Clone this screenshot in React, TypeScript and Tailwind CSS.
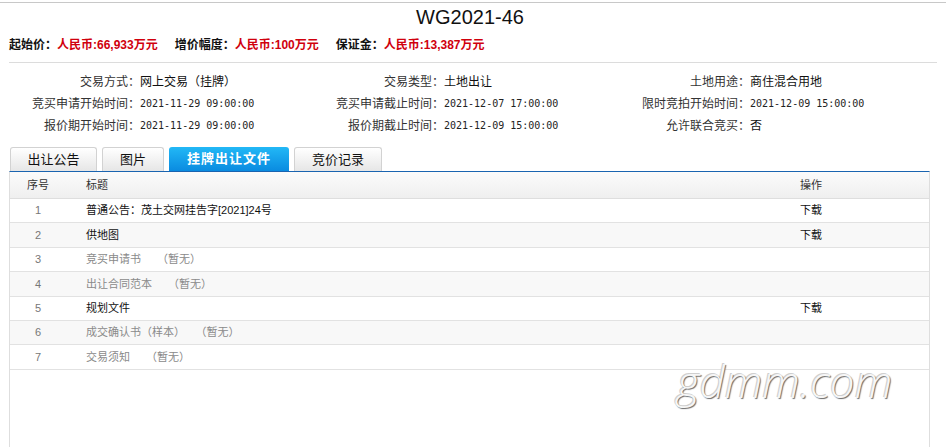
import { ReactNode } from 'react';

type InfoCell = { label: string; value: string; mono?: boolean };

const infoRows: InfoCell[][] = [
    [
        { label: '交易方式：', value: '网上交易（挂牌）' },
        { label: '交易类型：', value: '土地出让' },
        { label: '土地用途：', value: '商住混合用地' },
    ],
    [
        { label: '竞买申请开始时间：', value: '2021-11-29 09:00:00', mono: true },
        { label: '竞买申请截止时间：', value: '2021-12-07 17:00:00', mono: true },
        { label: '限时竞拍开始时间：', value: '2021-12-09 15:00:00', mono: true },
    ],
    [
        { label: '报价期开始时间：', value: '2021-11-29 09:00:00', mono: true },
        { label: '报价期截止时间：', value: '2021-12-09 15:00:00', mono: true },
        { label: '允许联合竞买：', value: '否' },
    ],
];

const tabs = ['出让公告', '图片', '挂牌出让文件', '竞价记录'];
const activeTab = 2;
const tabWidths = ['w-[87px]', 'w-[62px]', 'w-[120px]', 'w-[88px]'];

type Doc = { title: string; available: boolean };

const docs: Doc[] = [
    { title: '普通公告：茂土交网挂告字[2021]24号', available: true },
    { title: '供地图', available: true },
    { title: '竞买申请书', available: false },
    { title: '出让合同范本', available: false },
    { title: '规划文件', available: true },
    { title: '成交确认书（样本）', available: false },
    { title: '交易须知', available: false },
];

function Price({ label, value }: { label: string; value: string }) {
    return (
        <span className="mr-[17px] font-bold">
            <span className="text-[#111]">{label}</span>
            <span className="text-[#d0000d]">{value}</span>
        </span>
    );
}

function Info({ cell }: { cell: InfoCell }): ReactNode {
    return (
        <>
            <div className="text-right text-[#333]">{cell.label}</div>
            <div
                className={
                    cell.mono
                        ? "font-['DejaVu_Sans_Mono',monospace] text-[10px] text-[#222]"
                        : 'text-[#111]'
                }
            >
                {cell.value}
            </div>
        </>
    );
}

export default function App() {
    return (
        <div className="relative h-[447px] w-[946px] overflow-hidden bg-white pt-[2px] font-['Liberation_Sans','Noto_Sans_CJK_SC',sans-serif]">
            <div className="flex h-full flex-col border-t border-[#c8c8c8]">
                {/* Lot number */}
                <h1 className="pr-[6px] text-center text-[20px] leading-[28px] text-[#111]">WG2021-46</h1>

                {/* Price summary */}
                <div className="mx-[9px] mt-[4px] border-b border-[#dcdcdc] pb-[7px] text-[12px] leading-[20px]">
                    <Price label="起始价：" value="人民币:66,933万元" />
                    <Price label="增价幅度：" value="人民币:100万元" />
                    <Price label="保证金：" value="人民币:13,387万元" />
                </div>

                {/* Trade details */}
                <div className="mx-[9px] grid grid-cols-[131px_173px_131px_175px_131px_1fr] pt-[8px] text-[12px] leading-[22px]">
                    {infoRows.map((row, i) =>
                        row.map((cell, j) => <Info key={`${i}-${j}`} cell={cell} />)
                    )}
                </div>

                {/* Tabs */}
                <div className="ml-[10px] mt-[10px] flex h-[24px] gap-[5px] text-[13px]">
                    {tabs.map((tab, i) =>
                        i === activeTab ? (
                            <div
                                key={tab}
                                className={`${tabWidths[i]} flex items-center justify-center rounded-t-[3px] bg-linear-to-b from-[#22b8f6] to-[#0a8be0] font-bold tracking-[1px] text-white`}
                            >
                                {tab}
                            </div>
                        ) : (
                            <div
                                key={tab}
                                className={`${tabWidths[i]} flex items-center justify-center rounded-t-[3px] border border-b-0 border-[#d2d2d2] bg-linear-to-b from-white to-[#e6e6e6] text-[#111]`}
                            >
                                {tab}
                            </div>
                        )
                    )}
                </div>

                {/* Document list */}
                <div className="mx-[9px] flex w-[921px] flex-1 flex-col border-x border-t border-x-[#dedede] border-t-[#1a64b0] text-[11px]">
                    <div className="grid h-[27px] grid-cols-[56px_1fr_129px] items-center border-b border-[#dedede] bg-linear-to-b from-[#fbfbfb] to-[#efefef] text-[#333]">
                        <div className="text-center">序号</div>
                        <div className="pl-[20px]">标题</div>
                        <div>操作</div>
                    </div>
                    {docs.map((doc, i) => (
                        <div
                            key={doc.title}
                            className={`grid h-[24.4px] grid-cols-[56px_1fr_129px] items-center border-b border-[#e2e2e2] ${
                                i % 2 === 1 ? 'bg-[#f8f8f8]' : 'bg-white'
                            }`}
                        >
                            <div className="text-center text-[#777]">{i + 1}</div>
                            <div className={`pl-[20px] ${doc.available ? 'text-[#111]' : 'text-[#8a8a8a]'}`}>
                                {doc.title}
                                {!doc.available && <span className="ml-[16px]">（暂无）</span>}
                            </div>
                            <div className="text-[#111]">{doc.available ? '下载' : ''}</div>
                        </div>
                    ))}
                </div>
            </div>

            {/* Site watermark */}
            <div className="pointer-events-none absolute left-[677px] top-[359px] font-['Open_Sans',sans-serif] text-[44px] font-light italic leading-[44px] text-[#f6f6f6] [text-shadow:1px_1px_1px_#6a6a6a,-1px_-1px_0_#cfcfcf]">
                gdmm.com
            </div>
        </div>
    );
}
